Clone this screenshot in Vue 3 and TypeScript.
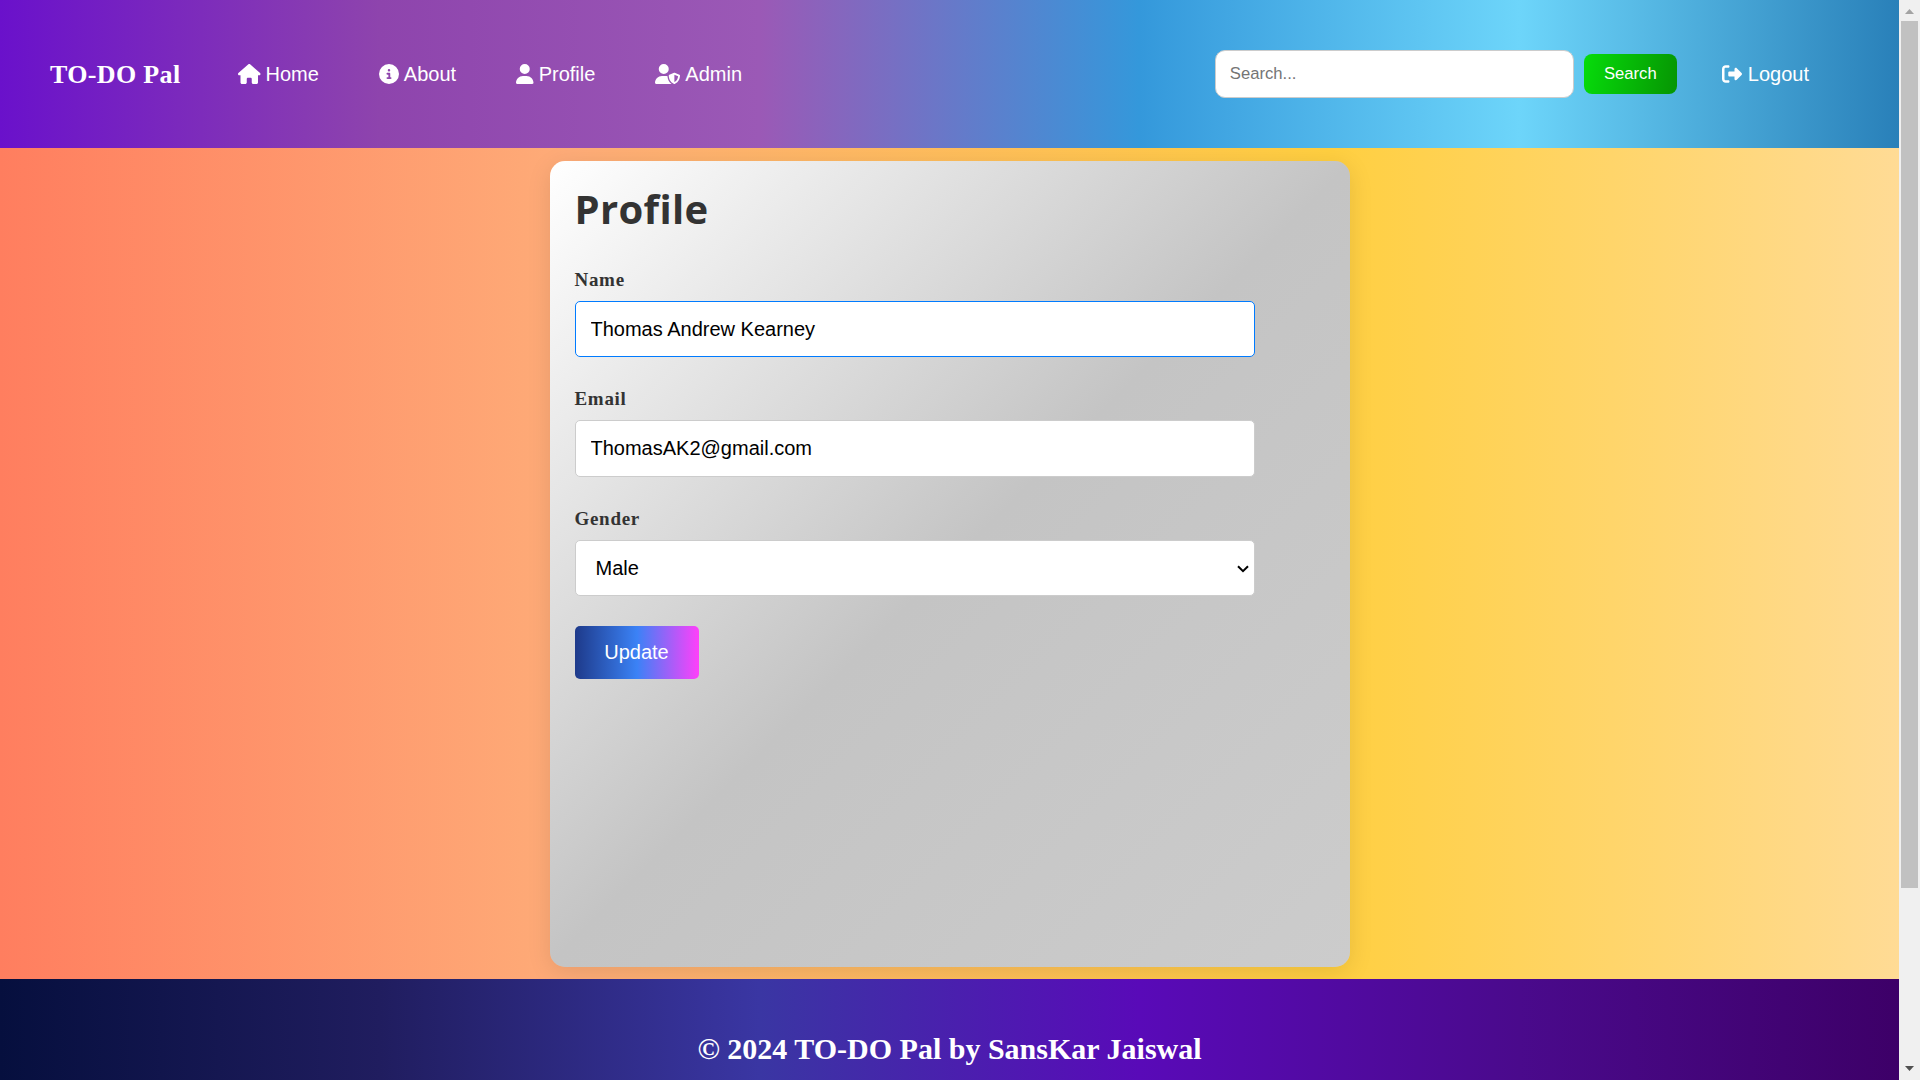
<script setup lang="ts">
import { ref } from 'vue'

interface NavLink {
  label: string
  viewBox: string
  width: number
  path: string
}

const links: NavLink[] = [
  {
    label: 'Home',
    viewBox: '0 0 576 512',
    width: 22.5,
    path: 'M575.8 255.5c0 18-15 32.1-32 32.1h-32l.7 160.2c0 2.700-.2 5.400-.5 8.100V472c0 22.100-17.900 40-40 40H456c-1.100 0-2.200 0-3.300-.1c-1.400 .1-2.800 .1-4.200 .1H416 392c-22.100 0-40-17.900-40-40V448 384c0-17.700-14.300-32-32-32H256c-17.700 0-32 14.300-32 32v64 24c0 22.100-17.900 40-40 40H160 128.100c-1.500 0-3-.1-4.500-.2c-1.200 .1-2.400 .2-3.600 .2H104c-22.100 0-40-17.900-40-40V360c0-.9 0-1.900 .1-2.800V287.600H32c-18 0-32-14-32-32.100c0-9 3-17 10-24L266.400 8c7-7 15-8 22-8s15 2 21 7L564.800 231.500c8 7 12 15 11 24z',
  },
  {
    label: 'About',
    viewBox: '0 0 512 512',
    width: 20,
    path: 'M256 512A256 256 0 1 0 256 0a256 256 0 1 0 0 512zM216 336h24V272H216c-13.300 0-24-10.700-24-24s10.700-24 24-24h48c13.300 0 24 10.700 24 24v88h8c13.300 0 24 10.700 24 24s-10.700 24-24 24H216c-13.300 0-24-10.700-24-24s10.700-24 24-24zm40-208a32 32 0 1 1 0 64 32 32 0 1 1 0-64z',
  },
  {
    label: 'Profile',
    viewBox: '0 0 448 512',
    width: 17.5,
    path: 'M224 256A128 128 0 1 0 224 0a128 128 0 1 0 0 256zm-45.700 48C79.800 304 0 383.800 0 482.300C0 498.700 13.300 512 29.700 512H418.300c16.400 0 29.700-13.300 29.700-29.700C448 383.800 368.200 304 269.700 304H178.300z',
  },
  {
    label: 'Admin',
    viewBox: '0 0 640 512',
    width: 25,
    path: 'M224 256A128 128 0 1 0 224 0a128 128 0 1 0 0 256zm-45.700 48C79.800 304 0 383.800 0 482.300C0 498.700 13.300 512 29.700 512l388.600 0c1.800 0 3.500-.2 5.300-.5c-76.300-55.100-99.800-141-103.100-200.200c-16.100-4.800-33.100-7.300-50.700-7.300l-91.400 0zm308.800-78.300l-120 48C358 277.400 352 286.200 352 296c0 63.300 25.900 168.800 134.800 214.200c5.900 2.500 12.600 2.500 18.500 0C614.100 464.800 640 359.300 640 296c0-9.800-6-18.600-15.100-22.300l-120-48c-5.700-2.300-12.100-2.300-17.800 0zM591.400 312c-3.900 50.700-27.200 116.700-95.400 149.700V273.800L591.400 312z',
  },
]

const query = ref('')
const name = ref('Thomas Andrew Kearney')
const email = ref('ThomasAK2@gmail.com')
const gender = ref('Male')
</script>

<template>
  <div class="window">
    <div class="page">
      <header class="navbar">
        <div class="brand">TO-DO Pal</div>
        <nav class="links">
          <a v-for="link in links" :key="link.label" class="link">
            <svg :viewBox="link.viewBox" :style="{ width: link.width + 'px' }"><path :d="link.path" /></svg>
            <span>{{ link.label }}</span>
          </a>
        </nav>
        <form class="search" @submit.prevent>
          <input v-model="query" type="text" placeholder="Search..." />
          <button type="submit">Search</button>
        </form>
        <a class="link logout">
          <svg viewBox="0 0 512 512"><path d="M377.900 105.900L500.700 228.700c7.200 7.200 11.300 17.100 11.300 27.300s-4.100 20.100-11.300 27.300L377.900 406.100c-6.400 6.400-15 9.900-24 9.900c-18.700 0-33.900-15.200-33.900-33.900l0-62.100-128 0c-17.700 0-32-14.300-32-32l0-64c0-17.700 14.300-32 32-32l128 0 0-62.100c0-18.700 15.200-33.900 33.900-33.900c9 0 17.600 3.600 24 9.900zM160 96L96 96c-17.700 0-32 14.300-32 32l0 256c0 17.700 14.300 32 32 32l64 0c17.700 0 32 14.300 32 32s-14.300 32-32 32l-64 0c-53 0-96-43-96-96L0 128C0 75 43 32 96 32l64 0c17.700 0 32 14.300 32 32s-14.300 32-32 32z" /></svg>
          <span>Logout</span>
        </a>
      </header>

      <main class="content">
        <section class="card">
          <h1>Profile</h1>
          <form @submit.prevent>
            <label for="name">Name</label>
            <input id="name" v-model="name" class="field active" type="text" />
            <label for="email">Email</label>
            <input id="email" v-model="email" class="field email" type="email" />
            <label for="gender">Gender</label>
            <div class="select-wrap">
              <select id="gender" v-model="gender" class="field">
                <option>Male</option>
                <option>Female</option>
                <option>Other</option>
              </select>
              <svg class="chevron" viewBox="0 0 12 8"><path d="M1 1.200L6 6.200L11 1.200" /></svg>
            </div>
            <button class="update" type="submit">Update</button>
          </form>
        </section>
      </main>

      <footer class="footer">© 2024 TO-DO Pal by SansKar Jaiswal</footer>
    </div>

    <div class="scrollbar">
      <svg class="arrow up" viewBox="0 0 9 5"><path d="M0 5L4.500 0L9 5z" /></svg>
      <div class="thumb"></div>
      <svg class="arrow down" viewBox="0 0 9 5"><path d="M0 0L4.500 5L9 0z" /></svg>
    </div>
  </div>
</template>

<style>
body {
  margin: 0;
  overflow: hidden;
}
</style>

<style scoped>
* {
  box-sizing: border-box;
}

.window {
  display: flex;
  width: 1920px;
  height: 1080px;
  overflow: hidden;
  font-family: 'Liberation Sans', Arial, sans-serif;
}

.page {
  display: flex;
  flex-direction: column;
  width: 1899px;
}

.navbar {
  display: flex;
  align-items: center;
  height: 148px;
  flex: none;
  padding-left: 50px;
  color: #fff;
  background: linear-gradient(to right, #6a11cb, #8e44ad, #9b59b6, #3498db, #6dd5fa, #2980b9);
}

.brand {
  width: 188px;
  padding-top: 2px;
  font: bold 26px 'Liberation Serif', 'Times New Roman', serif;
  letter-spacing: 0.35px;
  white-space: nowrap;
}

.links {
  display: flex;
  gap: 60px;
}

.link {
  display: flex;
  align-items: center;
  gap: 5px;
  font-size: 20px;
  line-height: 25px;
}

.link svg {
  height: 20px;
  flex: none;
  fill: #fff;
}

.search {
  display: flex;
  align-items: center;
  gap: 10px;
  margin-left: auto;
}

.search input {
  width: 359px;
  height: 48px;
  padding: 0 14px;
  border: 1px solid #ccc;
  border-radius: 10px;
  outline: none;
  background: #fff;
  font: 16.67px 'Liberation Sans', Arial, sans-serif;
}

.search input::placeholder {
  color: #757575;
}

.search button {
  width: 93px;
  height: 40px;
  padding: 0;
  border: 0;
  border-radius: 8px;
  color: #fff;
  background: linear-gradient(100deg, #06dc0b, #069503);
  font: 16.67px 'Liberation Sans', Arial, sans-serif;
}

.logout {
  gap: 6px;
  margin: 0 90px 0 45px;
}

.logout svg {
  width: 20px;
}

.content {
  height: 831px;
  flex: none;
  padding: 13px 0 12px;
  overflow: hidden;
  background: linear-gradient(to right, #ff7e5f 0%, #feac78 30%, #ffcf40 70%, #ffdb95 100%);
}

.card {
  width: 800px;
  height: 806px;
  margin: 0 auto;
  padding: 24px 25px 25px;
  border-radius: 15px;
  background: linear-gradient(135deg, #fff, #c4c4c4 50%, #ccc);
  box-shadow: 0 5px 25px rgba(0, 0, 0, 0.1);
}

h1 {
  margin: 0 0 31px;
  color: #333;
  font: bold 40px/48px 'Open Sans', 'Noto Sans', sans-serif;
  letter-spacing: 0.35px;
}

label {
  display: block;
  height: 37px;
  color: #333;
  font: bold 19px/31px 'Liberation Serif', 'Times New Roman', serif;
  letter-spacing: 0.7px;
}

.field {
  display: block;
  width: 680px;
  height: 56px;
  margin: 0 0 26px;
  padding: 0 15px;
  border: 1px solid #ccc;
  border-radius: 5px;
  outline: none;
  color: #000;
  background: #fff;
  font: 20px 'Liberation Sans', Arial, sans-serif;
}

.field.active {
  border-color: #007bff;
}

.field.email {
  height: 57px;
  padding-bottom: 1px;
}

.select-wrap {
  position: relative;
  width: 680px;
}

select.field {
  padding-left: 20px;
  margin-bottom: 30px;
  appearance: none;
}

.chevron {
  position: absolute;
  right: 6px;
  top: 25px;
  width: 12px;
  height: 8px;
  fill: none;
  stroke: #000;
  stroke-width: 2;
}

.update {
  width: 124px;
  height: 53px;
  padding: 0;
  border: 0;
  border-radius: 5px;
  color: #fff;
  background: linear-gradient(to right, #1e3a8a, #3b82f6, #ff40fa);
  font: 20px 'Liberation Sans', Arial, sans-serif;
}

.footer {
  flex: none;
  height: 140px;
  color: #fff;
  background: linear-gradient(to right, #060f3e, #201d5f, #3a36a3, #590ab8, #4a0a8c, #3d0068);
  font: bold 30px/140px 'Liberation Serif', 'Times New Roman', serif;
  text-align: center;
}

.scrollbar {
  display: flex;
  flex-direction: column;
  align-items: center;
  justify-content: space-between;
  width: 21px;
  height: 1080px;
  padding: 9px 0;
  background: #f0f0f0;
}

.thumb {
  width: 17px;
  height: 867px;
  margin: 7px 0 auto;
  background: #c1c1c1;
}

.arrow {
  flex: none;
  width: 9px;
  height: 5px;
  fill: #a3a3a3;
}

.arrow.down {
  fill: #505050;
}
</style>
